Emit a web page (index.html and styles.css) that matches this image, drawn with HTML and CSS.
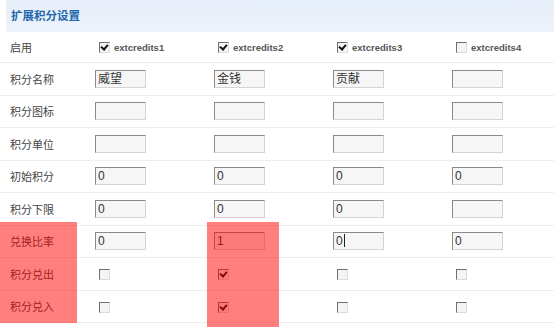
FILE: index.html
```html
<!DOCTYPE html>
<html lang="zh-CN">
<head>
<meta charset="UTF-8">
<title>扩展积分设置</title>
<link rel="stylesheet" href="styles.css">
</head>
<body>
<div class="wrap">
<div class="hd">扩展积分设置</div>
<table class="grid">
<colgroup><col class="c0"><col class="c1"><col class="c1"><col class="c1"><col></colgroup>
<tr class="first"><td class="lbl">启用</td>
<td><span class="cb on"></span><b class="ext">extcredits1</b></td>
<td><span class="cb on"></span><b class="ext">extcredits2</b></td>
<td><span class="cb on"></span><b class="ext">extcredits3</b></td>
<td><span class="cb"></span><b class="ext">extcredits4</b></td></tr>
<tr><td class="lbl">积分名称</td>
<td><span class="box">威望</span></td><td><span class="box">金钱</span></td><td><span class="box">贡献</span></td><td><span class="box"></span></td></tr>
<tr><td class="lbl">积分图标</td>
<td><span class="box"></span></td><td><span class="box"></span></td><td><span class="box"></span></td><td><span class="box"></span></td></tr>
<tr><td class="lbl">积分单位</td>
<td><span class="box"></span></td><td><span class="box"></span></td><td><span class="box"></span></td><td><span class="box"></span></td></tr>
<tr><td class="lbl">初始积分</td>
<td><span class="box">0</span></td><td><span class="box">0</span></td><td><span class="box">0</span></td><td><span class="box">0</span></td></tr>
<tr><td class="lbl">积分下限</td>
<td><span class="box">0</span></td><td><span class="box">0</span></td><td><span class="box">0</span></td><td><span class="box"></span></td></tr>
<tr><td class="lbl">兑换比率</td>
<td><span class="box">0</span></td><td><span class="box">1</span></td><td><span class="box">0<i class="caret"></i></span></td><td><span class="box">0</span></td></tr>
<tr><td class="lbl">积分兑出</td>
<td><span class="cb"></span></td><td><span class="cb on"></span></td><td><span class="cb"></span></td><td><span class="cb"></span></td></tr>
<tr><td class="lbl">积分兑入</td>
<td><span class="cb"></span></td><td><span class="cb on"></span></td><td><span class="cb"></span></td><td><span class="cb"></span></td></tr>
</table>
<div class="mark mark-a"></div>
<div class="mark mark-b"></div>
</div>
</body>
</html>
```
FILE: styles.css
```css
body { margin: 0; background: #fff; color: #333; font-family: "Liberation Sans", "Noto Sans CJK SC", sans-serif; }
.wrap { position: relative; width: 554px; height: 331px; overflow: hidden; }
.hd { height: 32px; line-height: 32px; margin-left: 6px; padding-left: 5px; background: linear-gradient(#e6eef9, #edf3fb); color: #1f68ad; font-weight: bold; font-size: 11.5px; }
.grid { width: 100%; border-collapse: collapse; table-layout: fixed; }
.c0 { width: 95px; }
.c1 { width: 119px; }
.grid td { height: 31.5px; padding: 0; border-bottom: 1px solid #eeeeee; font-size: 11px; vertical-align: middle; }
.grid tr.first td { height: 30px; }
.lbl { padding-left: 10px !important; color: #444; }
.box { display: inline-block; box-sizing: border-box; width: 51px; height: 18px; line-height: 16px; padding-left: 2px; vertical-align: middle; background: #f6f6f6; border: 1px solid #d4d4d4; border-top-color: #8a8a8a; border-left-color: #8a8a8a; font-size: 12px; color: #333; }
.caret { display: inline-block; width: 1px; height: 13px; background: #222; vertical-align: -2px; margin-left: 1px; }
.cb { display: inline-block; box-sizing: border-box; width: 11px; height: 11px; margin-left: 4px; vertical-align: middle; position: relative; background: #f4f4f4; border: 1px solid #dcdcdc; border-top-color: #6f6f6f; border-left-color: #6f6f6f; }
.cb.on::after { content: ""; position: absolute; left: 2px; top: 0px; width: 3px; height: 5px; border: solid #111; border-width: 0 2px 2px 0; transform: rotate(40deg); }
.ext { margin-left: 4px; vertical-align: middle; font-size: 9.5px; color: #555; }
.mark { position: absolute; background: rgba(255, 0, 0, 0.5); }
.mark-a { left: 0; top: 222px; width: 77px; height: 101px; }
.mark-b { left: 207px; top: 222px; width: 72px; height: 105px; }
```
